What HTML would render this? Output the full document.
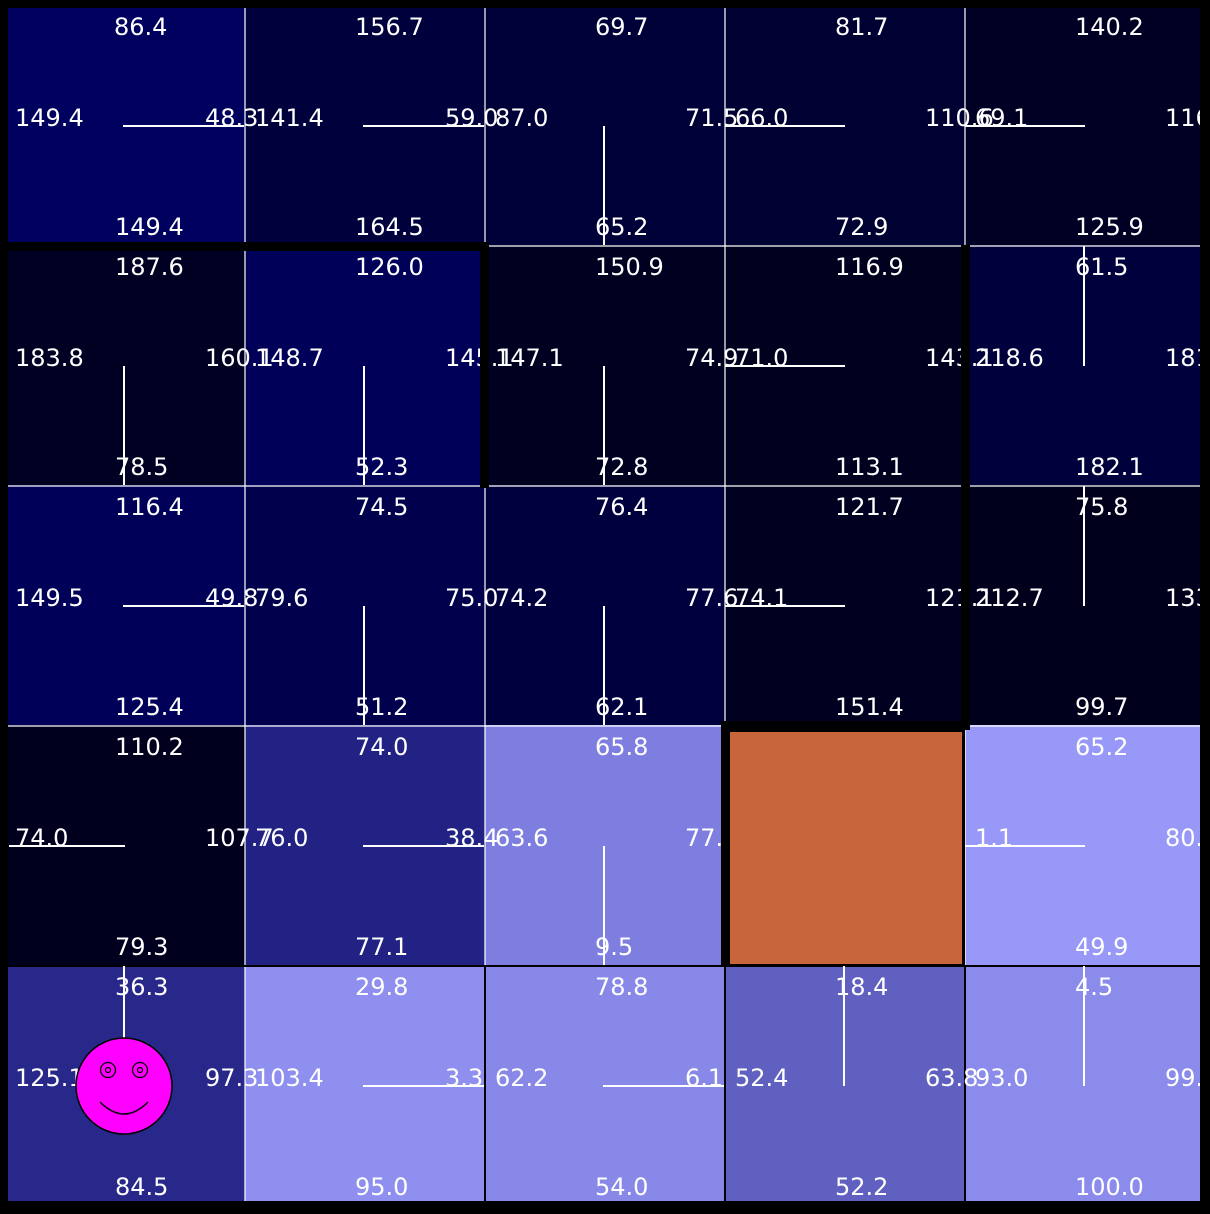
<!DOCTYPE html>
<html><head><meta charset="utf-8">
<style>
html,body{margin:0;padding:0;background:#f0f3f0;}
svg{display:block;}
text{font-family:"DejaVu Sans","Liberation Sans",sans-serif;font-size:24px;fill:#fff;}
</style></head><body>
<svg width="1210" height="1214" viewBox="0 0 1210 1214" xmlns="http://www.w3.org/2000/svg">
<defs><clipPath id="c"><rect x="4" y="4" width="1199" height="1199"/></clipPath></defs>
<rect x="0" y="0" width="1210" height="1214" fill="#000"/>
<g clip-path="url(#c)">
<!-- backgrounds -->
<rect x="5" y="5" width="240" height="240" fill="#00005f"/>
<rect x="245" y="5" width="240" height="240" fill="#00003d"/>
<rect x="485" y="5" width="240" height="240" fill="#000038"/>
<rect x="725" y="5" width="240" height="240" fill="#000033"/>
<rect x="965" y="5" width="240" height="240" fill="#000024"/>
<rect x="5" y="245" width="240" height="240" fill="#000023"/>
<rect x="245" y="245" width="240" height="240" fill="#000058"/>
<rect x="485" y="245" width="240" height="240" fill="#000020"/>
<rect x="725" y="245" width="240" height="240" fill="#00001f"/>
<rect x="965" y="245" width="240" height="240" fill="#00003c"/>
<rect x="5" y="485" width="240" height="240" fill="#000058"/>
<rect x="245" y="485" width="240" height="240" fill="#00004d"/>
<rect x="485" y="485" width="240" height="240" fill="#00003f"/>
<rect x="725" y="485" width="240" height="240" fill="#000020"/>
<rect x="965" y="485" width="240" height="240" fill="#00001c"/>
<rect x="5" y="725" width="240" height="240" fill="#00001e"/>
<rect x="245" y="725" width="240" height="240" fill="#222285"/>
<rect x="485" y="725" width="240" height="240" fill="#7e7ee0"/>
<rect x="725" y="725" width="240" height="240" fill="#000"/>
<rect x="965" y="725" width="240" height="240" fill="#9898f8"/>
<rect x="5" y="965" width="240" height="240" fill="#28288a"/>
<rect x="245" y="965" width="240" height="240" fill="#8f8fef"/>
<rect x="485" y="965" width="240" height="240" fill="#8888e8"/>
<rect x="725" y="965" width="240" height="240" fill="#6060c0"/>
<rect x="965" y="965" width="240" height="240" fill="#8b8beb"/>
<!-- grid lines -->
<g stroke="#fff" stroke-width="1.2">
<line x1="245" y1="0" x2="245" y2="1210"/><line x1="485" y1="0" x2="485" y2="1210"/>
<line x1="725" y1="0" x2="725" y2="1210"/><line x1="965" y1="0" x2="965" y2="1210"/>
<line x1="0" y1="246" x2="1210" y2="246"/><line x1="0" y1="486" x2="1210" y2="486"/>
<line x1="0" y1="726" x2="1210" y2="726"/><line x1="0" y1="966" x2="1210" y2="966"/>
</g>
<g stroke="#000" stroke-width="2">
<line x1="0" y1="966" x2="1210" y2="966"/>
<line x1="725" y1="966" x2="725" y2="1210"/><line x1="965" y1="966" x2="965" y2="1210"/>
<line x1="485" y1="966" x2="485" y2="1210"/>
</g>
<!-- direction lines -->
<g stroke="#fff" stroke-width="2">
<line x1="123" y1="126" x2="244" y2="126"/>
<line x1="363" y1="126" x2="484" y2="126"/>
<line x1="604" y1="126" x2="604" y2="245"/>
<line x1="725" y1="126" x2="845" y2="126"/>
<line x1="965" y1="126" x2="1085" y2="126"/>
<line x1="124" y1="366" x2="124" y2="485"/>
<line x1="364" y1="366" x2="364" y2="485"/>
<line x1="604" y1="366" x2="604" y2="485"/>
<line x1="725" y1="366" x2="845" y2="366"/>
<line x1="1084" y1="246" x2="1084" y2="366"/>
<line x1="123" y1="606" x2="244" y2="606"/>
<line x1="364" y1="606" x2="364" y2="725"/>
<line x1="604" y1="606" x2="604" y2="725"/>
<line x1="725" y1="606" x2="845" y2="606"/>
<line x1="1084" y1="486" x2="1084" y2="606"/>
<line x1="9" y1="846" x2="125" y2="846"/>
<line x1="363" y1="846" x2="484" y2="846"/>
<line x1="604" y1="846" x2="604" y2="965"/>
<line x1="965" y1="846" x2="1085" y2="846"/>
<line x1="124" y1="966" x2="124" y2="1086"/>
<line x1="363" y1="1086" x2="484" y2="1086"/>
<line x1="603" y1="1086" x2="724" y2="1086"/>
<line x1="844" y1="966" x2="844" y2="1086"/>
<line x1="1084" y1="966" x2="1084" y2="1086"/>
</g>
<!-- texts -->
<text x="114" y="35">86.4</text><text x="15" y="126">149.4</text><text x="205" y="126">48.3</text><text x="115" y="235">149.4</text>
<text x="355" y="35">156.7</text><text x="255" y="126">141.4</text><text x="445" y="126">59.0</text><text x="355" y="235">164.5</text>
<text x="595" y="35">69.7</text><text x="495" y="126">87.0</text><text x="685" y="126">71.5</text><text x="595" y="235">65.2</text>
<text x="835" y="35">81.7</text><text x="735" y="126">66.0</text><text x="925" y="126">110.6</text><text x="835" y="235">72.9</text>
<text x="1075" y="35">140.2</text><text x="975" y="126">69.1</text><text x="1165" y="126">116.0</text><text x="1075" y="235">125.9</text>

<text x="115" y="275">187.6</text><text x="15" y="366">183.8</text><text x="205" y="366">160.1</text><text x="115" y="475">78.5</text>
<text x="355" y="275">126.0</text><text x="255" y="366">148.7</text><text x="445" y="366">145.1</text><text x="355" y="475">52.3</text>
<text x="595" y="275">150.9</text><text x="495" y="366">147.1</text><text x="685" y="366">74.9</text><text x="595" y="475">72.8</text>
<text x="835" y="275">116.9</text><text x="735" y="366">71.0</text><text x="925" y="366">143.1</text><text x="835" y="475">113.1</text>
<text x="1075" y="275">61.5</text><text x="975" y="366">218.6</text><text x="1165" y="366">181.0</text><text x="1075" y="475">182.1</text>

<text x="115" y="515">116.4</text><text x="15" y="606">149.5</text><text x="205" y="606">49.8</text><text x="115" y="715">125.4</text>
<text x="355" y="515">74.5</text><text x="255" y="606">79.6</text><text x="445" y="606">75.0</text><text x="355" y="715">51.2</text>
<text x="595" y="515">76.4</text><text x="495" y="606">74.2</text><text x="685" y="606">77.6</text><text x="595" y="715">62.1</text>
<text x="835" y="515">121.7</text><text x="735" y="606">74.1</text><text x="925" y="606">121.1</text><text x="835" y="715">151.4</text>
<text x="1075" y="515">75.8</text><text x="975" y="606">212.7</text><text x="1165" y="606">133.0</text><text x="1075" y="715">99.7</text>

<text x="115" y="755">110.2</text><text x="15" y="846">74.0</text><text x="205" y="846">107.7</text><text x="115" y="955">79.3</text>
<text x="355" y="755">74.0</text><text x="255" y="846">76.0</text><text x="445" y="846">38.4</text><text x="355" y="955">77.1</text>
<text x="595" y="755">65.8</text><text x="495" y="846">63.6</text><text x="685" y="846">77.0</text><text x="595" y="955">9.5</text>
<text x="1075" y="755">65.2</text><text x="975" y="846">1.1</text><text x="1165" y="846">80.0</text><text x="1075" y="955">49.9</text>

<text x="115" y="995">36.3</text><text x="15" y="1086">125.1</text><text x="205" y="1086">97.3</text><text x="115" y="1195">84.5</text>
<text x="355" y="995">29.8</text><text x="255" y="1086">103.4</text><text x="445" y="1086">3.3</text><text x="355" y="1195">95.0</text>
<text x="595" y="995">78.8</text><text x="495" y="1086">62.2</text><text x="685" y="1086">6.1</text><text x="595" y="1195">54.0</text>
<text x="835" y="995">18.4</text><text x="735" y="1086">52.4</text><text x="925" y="1086">63.8</text><text x="835" y="1195">52.2</text>
<text x="1075" y="995">4.5</text><text x="975" y="1086">93.0</text><text x="1165" y="1086">99.0</text><text x="1075" y="1195">100.0</text>

<!-- orange cell -->
<rect x="725" y="727" width="240" height="238" fill="#000"/>
<rect x="730" y="732" width="232" height="232" fill="#c8653a"/>
<!-- smiley -->
<circle cx="124" cy="1086" r="48" fill="#ff00ff" stroke="#000" stroke-width="1.5"/>
<circle cx="108" cy="1070" r="7.5" fill="none" stroke="#000" stroke-width="1.3"/>
<circle cx="108" cy="1070" r="2.5" fill="none" stroke="#000" stroke-width="1.2"/>
<circle cx="140" cy="1070" r="7.5" fill="none" stroke="#000" stroke-width="1.3"/>
<circle cx="140" cy="1070" r="2.5" fill="none" stroke="#000" stroke-width="1.2"/>
<path d="M100 1102 Q124 1126 148 1102" fill="none" stroke="#000" stroke-width="1.5"/>
</g>
<!-- walls -->
<g fill="#000">
<rect x="0" y="242" width="489" height="9"/>
<rect x="480" y="242" width="9" height="246"/>
<rect x="961" y="245" width="9" height="485"/>
<rect x="721" y="721" width="245" height="9"/>
<rect x="721" y="721" width="9" height="246"/>
</g>
<!-- outer border -->
<rect x="4" y="4" width="1200" height="1201" fill="none" stroke="#000" stroke-width="8"/>
</svg>
</body></html>
